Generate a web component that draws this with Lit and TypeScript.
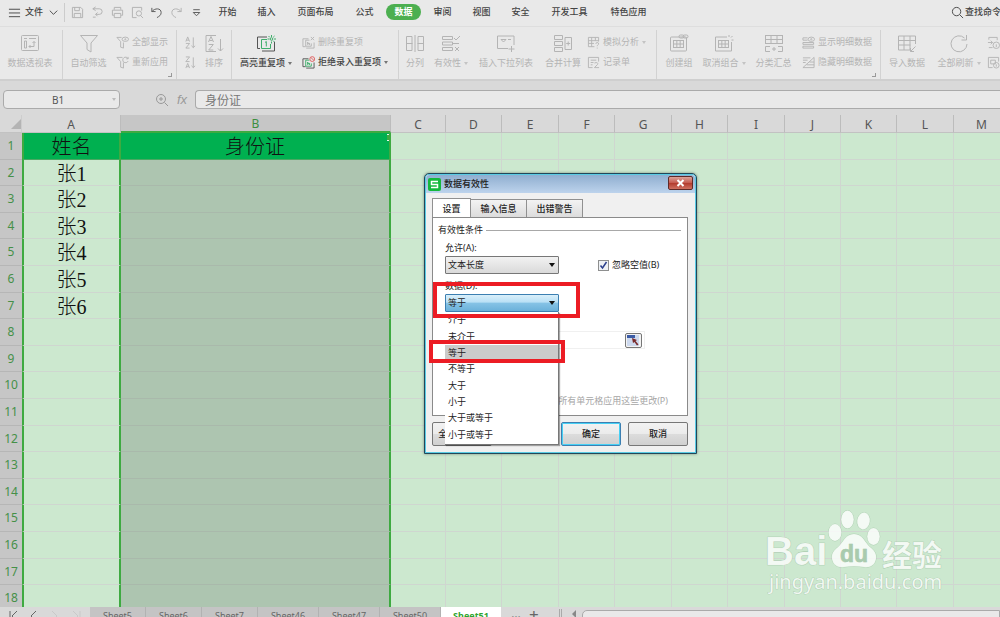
import { LitElement, html, css, svg, nothing } from "lit";
import { customElement } from "lit/decorators.js";
import { classMap } from "lit/directives/class-map.js";

type Shape = ReturnType<typeof svg>;

const grid = (x: number, y: number, w: number, h: number) => svg`
  <rect x=${x} y=${y} width=${w} height=${h} />
  <path d="M${x} ${y + h / 2}h${w}M${x + w / 3} ${y}v${h}M${x + (2 * w) / 3} ${y}v${h}" />`;

const stack = svg`
  <path d="M4 11.500H1V3h6M13 7v6H4.500" />
  <path d="M8 4.500H4v6.500h6V8M6 9.500V6.500l2 3v-2" />`;

/* 20 x 20 glyphs */
const BIG: Record<string, Shape> = {
  pivot: svg`<rect x="1.500" y="1.500" width="17" height="15" rx="1" />
    <path d="M4 4.500h3M9 4.500h7M4.500 7v7h2v-7zM14 7.500v5H9M12.500 9l1.500-1.500L15.500 9M10.500 11L9 12.500l1.500 1.500" />`,
  filter: svg`<path d="M1.500 1.500h17l-6.500 7.500v9l-4-2.500V9z" />`,
  sort: svg`<path d="M12 1.500H2v16h10M16.500 5v12M14 14.500l2.500 2.500 2.500-2.500" />
    <path d="M4.500 8L7 2.500 9.500 8M5.500 6.500h3M4.700 10.500h4.600L4.700 16h4.600" />`,
  highlight: svg`<g class="dark"><path d="M4 14.500H1.500V3H11M18.500 8v9H6" /></g>
    <g class="green"><path d="M11 5.500H5.500v9h9V10M9 8.500l1.300-1v5M15.500 1v2M15.500 7.500v2M11.500 5h2M18 5h2M12.500 2l1.300 1.300M18.500 2l-1.300 1.300M18.500 8l-1.300-1.300" /><circle cx="15.500" cy="5" r="1.300" /></g>`,
  split: svg`<path d="M7 2.500H1.500v14H7M13 2.500h5.500v14H13M1.500 9.500h6M12.500 9.500h6M7 2.500v14M13 2.500v14M10 1v17" />`,
  valid: svg`<path d="M1.500 2.500h10v3h-10zM1.500 8h10v3h-10zM1.500 13.500h10v3h-10zM13 4l2 2 4-4M12 9.500h6M14 13l4 4M18 13l-4 4" />`,
  dropdown: svg`<path d="M12 14.500H1.500V2H18v9M5 5.500h5L7.500 8zM12 5.500h3M15.500 12v6M12.500 15h6" />`,
  merge: svg`<path d="M1.500 1.500h8v4h-8zM1.500 7.500h8v4h-8zM1.500 13.500h8v4h-8zM12 3.500h6.500v12H12zM15.200 7.500v4M13.200 9.500h4" />`,
  group: svg`<rect x="1.500" y="3" width="16" height="14" rx="1" />${grid(4.5, 6.5, 10, 7)}
    <rect x="10" y="1" width="5" height="3" rx="1.500" /><rect x="14" y="1" width="5" height="3" rx="1.500" />`,
  ungroup: svg`<path d="M13 3H1.500v14h16V8" />${grid(4.5, 6.5, 10, 7)}<path d="M15 1v2M18.500 2L17 3.500M17.500 6h2" />`,
  subtotal: svg`<rect x="1.500" y="1.500" width="17" height="8" /><path d="M1.500 5.500h17M7 1.500v8M13 1.500v8M6 12.500H1.500v5H6M14 12.500h4.500v5H14M8 15h4M10 13v4" />`,
  importData: svg`<path d="M13 16H1.500V2h17v8M1.500 6.500h17M1.500 11h12M7 2v14M13 2v14M18.500 12.500l-5 5M13.500 14v3.500H17" />`,
  refresh: svg`<path d="M18 10a8 8 0 1 1-2.500-6M17.500 1v5H12.500" />`,
};

/* 14 x 14 glyphs */
const SMALL: Record<string, Shape> = {
  menu: svg`<path d="M1 3.500h12M1 7.500h12M1 11.500h12" />`,
  chevron: svg`<path d="M3 5l4 4 4-4" />`,
  save: svg`<path d="M1.500 1.500h9l2 2v9h-11zM4 1.500v3.500h5V1.500M3.500 12V8h7v4" />`,
  exportDoc: svg`<path d="M2 3h7a3 3 0 0 1 0 6H5M7 7L5 9l2 2M5 1L2 3l3 2M2 12h3" />`,
  print: svg`<path d="M3.500 4V1.500h7V4M3 10H1.500V4.500h11V10H11M3.500 8h7v4.500h-7z" />`,
  preview: svg`<path d="M6 12.500H1.500v-11h10V5" /><circle cx="8.500" cy="8" r="2.800" /><path d="M10.500 10.500l2.500 2.500" />`,
  undo: svg`<path d="M2 2v4h4M2 6c3-4 10-4 10 1 0 3-2 4-4.500 5.500" />`,
  redo: svg`<path d="M12 2v4H8M12 6C9 2 2 2 2 7c0 3 2 4 4.500 5.500" />`,
  more: svg`<path d="M3.500 4h7M3.500 7h7L7 10.500z" />`,
  search: svg`<circle cx="6" cy="6" r="4.500" /><path d="M9.500 9.500L13 13" />`,
  lens: svg`<circle cx="6" cy="6" r="4.500" /><path d="M9.500 9.500L13 13M4 6h4M6 4v4" />`,
  showAll: svg`<path d="M1 1.500h5M1 1.500L5 6v6l3 1V7" /><ellipse cx="10" cy="3.500" rx="3.500" ry="2.300" /><circle cx="10" cy="3.500" r="0.600" />`,
  reapply: svg`<path d="M1 1.500h6M1 1.500L5 6v6l3 1V7M13 3a3 3 0 1 0 0 2.500M13 1v2h-2" />`,
  sortAsc: svg`<path d="M2 6l2-5 2 5M2.700 4.500h2.600M2 8h4L2 13h4M10 1.500v11M8 10.500l2 2 2-2" />`,
  sortDesc: svg`<path d="M2 1h4L2 6h4M2 13l2-5 2 5M2.700 11.500h2.600M10 1.500v11M8 10.500l2 2 2-2" />`,
  removeDup: svg`${stack}<path d="M9.500 1l3.500 3.500M13 1L9.500 4.500" />`,
  rejectDup: svg`<g class="dark"><path d="M4 11.500H1V3h6M13 7v6H4.500" /></g><g class="green"><path d="M8 4.500H4v6.500h6V8M6 9.500V6.500l2 3v-2" /></g>
    <g class="red"><circle cx="11" cy="3.300" r="2.600" /><path d="M9.500 1.500l3.500 3.500" /></g>`,
  whatIf: svg`<path d="M8 11.500H1.500v-10h11V6M1.500 5h11M1.500 8h6M5 1.500v10M9 1.500V5M9.500 8.500c0-2 3-2 3 0 0 1-1.500 1-1.500 2.500M11 12.500v1" />`,
  form: svg`<path d="M6 12.500H1.500v-11h11V6M4 4.500h6M4 7h3M4 9.500h2M8 7.500c3-1 4 0 3.500 1.500L8 12.500h5" />`,
  showDetail: svg`<path d="M6 2H1v2.500h5M1 7h11.500v2H1zM1 11h11.500v2H1z" /><ellipse cx="10" cy="3.500" rx="3.500" ry="2.300" /><circle cx="10" cy="3.500" r="0.700" />`,
  hideDetail: svg`<path d="M1 2h8M1 4.500h5M1 7h3M1 12.500h12V1.500zM5 9.500h8M8 6.500h5" />`,
  link: svg`<path d="M2 4V1.500h9v3M2 12.500h4M1 7h5M4 5l2 2-2 2" /><circle cx="10" cy="10" r="3.500" /><path d="M10 9v3" />`,
  props: svg`<path d="M6 12.500H1.500v-11h11V6M4 4.500h5v4H4z" /><circle cx="10" cy="10" r="3" /><path d="M10 9v2.500" />`,
};

const icon = (name: string) =>
  name in BIG
    ? html`<svg class="big-icon" viewBox="0 0 20 20" aria-hidden="true">${BIG[name]}</svg>`
    : html`<svg class="small-icon" viewBox="0 0 14 14" aria-hidden="true">${SMALL[name]}</svg>`;

interface Cmd { icon: string; label: string; menu?: boolean; on?: boolean; width?: number }
interface Group { big?: Cmd[]; small?: Cmd[]; smallFirst?: boolean; launcher?: boolean; width?: number }

const GROUPS: Group[] = [
  { width: 63, big: [{ icon: "pivot", label: "数据透视表", width: 60 }] },
  { width: 114, launcher: true, big: [{ icon: "filter", label: "自动筛选", width: 51 }],
    small: [{ icon: "showAll", label: "全部显示" }, { icon: "reapply", label: "重新应用" }] },
  { width: 55, smallFirst: true, big: [{ icon: "sort", label: "排序", width: 34 }],
    small: [{ icon: "sortAsc", label: "" }, { icon: "sortDesc", label: "" }] },
  { width: 167, big: [{ icon: "highlight", label: "高亮重复项", menu: true, on: true, width: 68 }],
    small: [{ icon: "removeDup", label: "删除重复项" }, { icon: "rejectDup", label: "拒绝录入重复项", menu: true, on: true }] },
  { width: 258, big: [
      { icon: "split", label: "分列", width: 32 }, { icon: "valid", label: "有效性", menu: true, width: 40 },
      { icon: "dropdown", label: "插入下拉列表", width: 70 }, { icon: "merge", label: "合并计算", width: 44 }],
    small: [{ icon: "whatIf", label: "模拟分析", menu: true }, { icon: "form", label: "记录单" }] },
  { width: 224, launcher: true, big: [
      { icon: "group", label: "创建组", width: 44 }, { icon: "ungroup", label: "取消组合", menu: true, width: 46 },
      { icon: "subtotal", label: "分类汇总", width: 53 }],
    small: [{ icon: "showDetail", label: "显示明细数据" }, { icon: "hideDetail", label: "隐藏明细数据" }] },
  { big: [
      { icon: "importData", label: "导入数据", width: 52 }, { icon: "refresh", label: "全部刷新", menu: true, width: 52 }],
    small: [{ icon: "link", label: "" }, { icon: "props", label: "" }] },
];

const TABS = ["开始", "插入", "页面布局", "公式", "数据", "审阅", "视图", "安全", "开发工具", "特色应用"];
const QUICK = [["save", "保存"], ["exportDoc", "输出"], ["print", "打印"], ["preview", "预览"], ["undo", "撤销"], ["redo", "恢复"], ["more", "更多"]];
const COLS: [string, number][] = [
  ["A", 99], ["B", 270], ["C", 55], ["D", 56], ["E", 57], ["F", 56], ["G", 57],
  ["H", 56], ["I", 57], ["J", 56], ["K", 56], ["L", 57], ["M", 56],
];
const NAMES = ["姓名", "张1", "张2", "张3", "张4", "张5", "张6"];
const SHEETS: [string, number][] = [
  ["Sheet5", 56], ["Sheet6", 56], ["Sheet7", 56], ["Sheet46", 61], ["Sheet47", 61], ["Sheet50", 61], ["Sheet51", 60],
];
const OPERATORS = ["介于", "未介于", "等于", "不等于", "大于", "小于", "大于或等于", "小于或等于"];

const controls = css`
  * { box-sizing: border-box; }
  button, input, select { font: inherit; color: inherit; margin: 0; padding: 0; border: 0; background: none; border-radius: 0; }
  svg { display: block; fill: none; stroke: currentColor; flex: none; }
`;

@customElement("wps-ribbon")
class WpsRibbon extends LitElement {
  static styles = [controls, css`
    :host { display: block; background: #e9e9e9; color: #444; font-size: 9px; line-height: 12px; }
    .menubar { display: flex; align-items: center; height: 27px; border-bottom: 1px solid #dedede; white-space: nowrap; overflow: hidden; padding-bottom: 2px; }
    .file { display: flex; align-items: center; gap: 4px; width: 65px; height: 19px; padding-left: 8px; border-right: 1px solid #ccc; flex: none; font-weight: 500; }
    .quick { display: flex; width: 138px; margin: 0 2px 0 3px; flex: none; color: #b0b0b0; }
    .quick button { flex: 1; display: flex; justify-content: center; }
    .quick .strong { color: #555; }
    .tabs { display: flex; flex: 1; }
    .tab { width: 39px; display: flex; justify-content: center; font-weight: 500; flex: none; }
    .tab.wide { width: 59px; }
    .tab span { padding: 2px 8px; border-radius: 8px; }
    .tab.active span { background: #4caf50; color: #fff; font-weight: 700; }
    .find { display: flex; align-items: center; gap: 1px; flex: none; width: 49px; font-weight: 500; overflow: hidden; }
    .small-icon { width: 13px; height: 13px; stroke-width: 1; }
    .big-icon { width: 20px; height: 20px; stroke-width: 1; }
    .ribbon { display: flex; height: 54px; padding-top: 3px; border-bottom: 2px solid #cfcfcf; overflow: hidden; color: #b4b4b4; }
    .group { position: relative; display: flex; flex: none; border-right: 1px solid #d2d2d2; white-space: nowrap; }
    .group:last-child { border: 0; }
    .group.first-small .pair { order: -1; margin-left: 7px; }
    .cmd { display: flex; align-items: center; }
    .cmd.big { flex-direction: column; gap: 3px; padding-top: 4px; flex: none; }
    .cmd.small { gap: 3px; height: 20px; }
    .cmd.on { color: #444; font-weight: 500; }
    .cap { display: flex; align-items: center; gap: 3px; }
    .arrow { border: 2px solid transparent; border-top: 3px solid currentColor; border-bottom: 0; opacity: 0.7; }
    .pair { display: flex; flex-direction: column; padding-top: 2px; margin-left: 2px; }
    .green { color: #3fae6b; stroke: #3fae6b; }
    .dark { stroke: #555; }
    .red { stroke: #e06060; }
    .launcher { position: absolute; right: 4px; bottom: 2px; width: 4px; height: 4px; border: solid #999; border-width: 0 1px 1px 0; }
  `];

  private command(c: Cmd, big: boolean) {
    const caption = c.label
      ? html`<span class="cap">${c.label}${c.menu ? html`<i class="arrow"></i>` : nothing}</span>` : nothing;
    return html`<button class=${classMap({ cmd: true, big, small: !big, on: !!c.on })}
      style=${big ? `width:${c.width}px` : nothing} aria-label=${c.label || c.icon}>${icon(c.icon)}${caption}</button>`;
  }

  render() {
    return html`
      <nav class="menubar">
        <button class="file">${icon("menu")}<span>文件</span>${icon("chevron")}</button>
        <div class="quick">${QUICK.map(([n, l]) => html`
          <button class=${classMap({ strong: n === "undo" || n === "more" })} aria-label=${l}>${icon(n)}</button>`)}</div>
        <div class="tabs">${TABS.map((t) => html`
          <button class=${classMap({ tab: true, wide: t.length > 2, active: t === "数据" })}><span>${t}</span></button>`)}</div>
        <button class="find">${icon("search")}<span>查找命令</span></button>
      </nav>
      <div class="ribbon">${GROUPS.map((g) => html`
        <div class=${classMap({ group: true, "first-small": !!g.smallFirst })} style=${g.width ? `width:${g.width}px` : nothing}>
          ${g.big?.map((c) => this.command(c, true))}
          ${g.small ? html`<div class="pair">${g.small.map((c) => this.command(c, false))}</div>` : nothing}
          ${g.launcher ? html`<i class="launcher"></i>` : nothing}
        </div>`)}</div>`;
  }
}

@customElement("wps-sheet")
class WpsSheet extends LitElement {
  static styles = [controls, css`
    :host { display: flex; flex-direction: column; min-height: 0; background: #d9d9d9; }
    .formula { display: flex; align-items: center; height: 34px; flex: none; padding: 3px 0 0 3px; color: #999; }
    .name { display: flex; align-items: center; width: 117px; height: 19px; border: 1px solid #aaa; border-radius: 4px; background: #e9e9e9; padding-right: 3px; }
    .name input { flex: 1; min-width: 0; text-align: center; font-size: 10px; color: #555; }
    .arrow { border: 2px solid transparent; border-top: 3px solid #bbb; border-bottom: 0; }
    .tools { display: flex; align-items: center; gap: 8px; width: 75px; padding-left: 35px; }
    .small-icon { width: 14px; height: 14px; stroke-width: 1; }
    .fx { font: italic 13px "Liberation Sans", sans-serif; }
    .value { flex: 1; min-width: 0; height: 19px; border: 1px solid #aaa; border-right: 0; border-radius: 4px 0 0 4px; background: #e9e9e9; padding-left: 9px; font-size: 12px; color: #777; }
    .cells { flex: 1; min-height: 0; overflow: hidden; background: #cce8cf; }
    table { table-layout: fixed; width: 0; border-collapse: separate; border-spacing: 0; }
    th, td { padding: 0; overflow: hidden; white-space: nowrap; text-align: center; }
    thead th { height: 18px; padding-top: 2px; background: #d9d9d9; border-right: 1px solid #bcbcbc; border-bottom: 1px solid #c2c2c2; font-weight: 400; font-size: 12px; line-height: 14px; color: #555; }
    thead .picked { background: #c6c6c6; color: #3c8f3f; border-bottom: 2px solid #3eaa41; }
    thead .corner { text-align: right; border-right-color: #cdcdcd; }
    .corner i { display: inline-block; border: 5px solid transparent; border-right-color: #b4b4b4; border-bottom-color: #b4b4b4; }
    tbody tr { height: 27px; }
    tbody tr:nth-child(5n + 2), tbody tr:nth-child(5n + 4) { height: 26px; }
    tbody th { background: #c6c6c6; border-bottom: 1px solid #b6b6b6; font-weight: 400; font-size: 12px; line-height: 14px; color: #459048; }
    td { padding-top: 2px; border-right: 1px solid #cfd6d0; border-bottom: 1px solid #cfd6d0; font: 20px/22px "Liberation Serif", "Noto Sans CJK SC", serif; font-weight: 300; color: #111; }
    .a { border-left: 2px solid #3eaa41; border-right: 2px solid #3eaa41; }
    .b { position: relative; border-right: 2px solid #3eaa41; background: #adc5b0; border-bottom-color: #a9b9ab; }
    .title { background: #00b050; border-bottom-color: #4aa862; }
    .b.title::after { content: ""; position: absolute; right: -2px; top: 1px; width: 4px; height: 5px; background: #3eaa41; border: solid #e8f6e9; border-width: 1px 0; }
    .sheets { display: flex; height: 10px; flex: none; overflow: hidden; background: #d9d9d9; color: #666; }
    .nav { display: flex; width: 90px; padding-left: 6px; gap: 8px; color: #666; }
    .nav .off { color: #c9c9c9; }
    .nav svg { width: 14px; height: 14px; }
    .tab { height: 17px; background: #c4c4c4; border-right: 1px solid #b2b2b2; flex: none; font-size: 9px; line-height: 16px; }
    .tab.active { background: #fff; color: #2fa52f; font-weight: 700; border: 0; }
    .extra { height: 16px; font-size: 17px; line-height: 16px; }
    .extra.dots { width: 14px; height: 14px; margin: 0 6px 0 8px; font-size: 12px; line-height: 10px; }
    .grip { width: 3px; height: 9px; margin: 2px 8px 0 20px; border: solid #aaa; border-width: 0 1px; }
    .left { width: 12px; }
    .left i { display: block; margin: 3px 0 0 2px; border: 4px solid transparent; border-right-color: #888; border-left: 0; width: 0; }
    .track { flex: 1; height: 16px; margin-top: 3px; border: 1px solid #aaa; border-radius: 5px 0 0 5px; background: #e9e9e9; }
  `];

  render() {
    return html`
      <div class="formula">
        <div class="name"><input aria-label="名称框" value="B1" /><i class="arrow"></i></div>
        <div class="tools">${icon("lens")}<span class="fx">fx</span></div>
        <input class="value" aria-label="编辑栏" value="身份证" />
      </div>
      <div class="cells"><table>
        <colgroup><col style="width:22px" />${COLS.map(([, w]) => html`<col style="width:${w}px" />`)}</colgroup>
        <thead><tr><th class="corner"><i></i></th>${COLS.map(([c]) => html`<th class=${classMap({ picked: c === "B" })}>${c}</th>`)}</tr></thead>
        <tbody>${Array.from({ length: 18 }, (_, r) => html`<tr><th>${r + 1}</th>${COLS.map(([c]) => html`
          <td class=${classMap({ a: c === "A", b: c === "B", title: r === 0 && (c === "A" || c === "B") })}>${
            c === "A" ? NAMES[r] ?? nothing : c === "B" && r === 0 ? "身份证" : nothing}</td>`)}</tr>`)}</tbody>
      </table></div>
      <div class="sheets">
        <div class="nav">
          <svg viewBox="0 0 14 14"><path d="M4 4v10M11 4L6 9l5 5" /></svg>
          <svg viewBox="0 0 14 14"><path d="M8 4L3 9l5 5" /></svg>
          <svg class="off" viewBox="0 0 14 14"><path d="M2 4l5 5-5 5" /></svg>
          <svg class="off" viewBox="0 0 14 14"><path d="M1 4l5 5-5 5M8 4v10" /></svg>
        </div>
        ${SHEETS.map(([s, w]) => html`<button class=${classMap({ tab: true, active: s === "Sheet51" })} style="width:${w}px">${s}</button>`)}
        <button class="extra dots" aria-label="更多工作表">…</button><button class="extra" aria-label="新建工作表">+</button>
        <i class="grip"></i><span class="left"><i></i></span><div class="track"></div>
      </div>`;
  }
}

@customElement("validation-dialog")
class ValidationDialog extends LitElement {
  static styles = [controls, css`
    :host { display: block; box-sizing: border-box; width: 273px; border: 1px solid #21475a; border-radius: 5px 5px 0 0; background: #f0f0f0;
      box-shadow: inset 0 0 0 1px #59cbe4, 0 0 3px #0006; padding: 0 2px 3px; font-size: 9px; line-height: 12px; color: #222; }
    .titlebar { display: flex; align-items: center; gap: 3px; height: 18px; margin: 1px -1px 0; padding: 0 2px; border-radius: 4px 4px 0 0;
      background: linear-gradient(#8faed0, #bdd3ec); font-weight: 500; }
    .logo { width: 13px; height: 13px; stroke-width: 1.5; }
    .titlebar span { flex: 1; }
    .close { width: 25px; height: 14px; margin-top: -2px; border: 1px solid #5e2a28; border-radius: 2px; color: #fff;
      background: linear-gradient(#dba39a, #c4574c 50%, #b13a2d 51%, #cf7060); display: grid; place-items: center; }
    .close svg { width: 9px; height: 8px; stroke-width: 2; }
    .body { padding: 5px 6px 4px 5px; }
    .tabs { display: flex; align-items: flex-end; }
    .tab { height: 18px; width: 56px; border: 1px solid #909090; border-left: 0; border-bottom: 0; background: linear-gradient(#f3f3f3, #dcdcdc); font-weight: 500; }
    .tab.active { width: 39px; height: 20px; border-left: 1px solid #909090; background: #fff; margin-bottom: -1px; position: relative; }
    .panel { position: relative; height: 199px; border: 1px solid #8a8a8a; background: #fff; padding: 6px 6px 0 5px; }
    .legend { display: flex; align-items: center; gap: 3px; }
    .legend::after { content: ""; flex: 1; border-top: 1px solid #a8a8a8; }
    .field { display: flex; flex-direction: column; gap: 2px; padding: 6px 0 0 7px; }
    .line { display: flex; align-items: center; gap: 39px; }
    .pick { position: relative; width: 114px; height: 18px; }
    .pick select { appearance: none; width: 100%; height: 100%; border: 1px solid #777; padding-left: 2px; border-radius: 1px; background: linear-gradient(#f2f2f2, #dadada); display: block; }
    .pick::after { content: ""; position: absolute; right: 4px; top: 7px; border: 3px solid transparent; border-top: 4px solid #111; border-bottom: 0; }
    .pick.open select { border-color: #3c7fb1; background: linear-gradient(#d9effa, #b9e0f5 45%, #86c3e6 50%, #6bb1da); }
    .check { display: flex; align-items: center; gap: 3px; }
    .check input { appearance: none; width: 11px; height: 11px; border: 1px solid #8e8f8f; background: #eef1f5; }
    .tick { position: relative; display: block; height: 11px; }
    .tick input { display: block; }
    .tick svg { position: absolute; left: 1px; top: 1px; width: 9px; height: 9px; stroke: #2b3f8c; stroke-width: 1.5; }
    .list { position: absolute; z-index: 1; left: 12px; top: 94px; width: 114px; height: 133px; margin: 0; padding: 0 0 1px; list-style: none; display: flex; flex-direction: column;
      background: #fff; border-right: 1px solid #777; border-bottom: 1px solid #777; box-shadow: 1px 1px 1px #0005; }
    .list li { flex: 1; padding-left: 3px; display: flex; align-items: center; }
    .list .picked { background: #cbcbcb; }
    .range { display: flex; justify-content: flex-end; align-items: center; width: 200px; height: 18px; margin: 19px 0 0 7px; border: 1px solid #f0f0f0; padding-right: 2px; }
    .range input { flex: 1; min-width: 0; }
    .range button { width: 17px; height: 15px; border: 1px solid #777; border-radius: 2px; background: #f3f3f3; padding: 1px; }
    .range svg { width: 13px; height: 11px; stroke: none; }
    .apply { display: flex; justify-content: flex-end; align-items: center; gap: 3px; margin-top: 46px; padding-right: 13px; color: #a5a5a5; }
    .actions { display: flex; gap: 7px; padding-top: 6px; }
    .actions button { width: 60px; height: 24px; border: 1px solid #777; border-radius: 2px; background: linear-gradient(#f2f2f2, #ebebeb 50%, #dcdcdc 51%, #d0d0d0); font-weight: 500; }
    .actions .clear { margin-right: auto; }
    .actions .ok { border-color: #3c7fb1; box-shadow: inset 0 0 0 1px #46d0f5; }
    .mark { position: absolute; z-index: 2; border: 4px solid #ec1c24; pointer-events: none; }
    .mark.value { left: 0; top: 64px; width: 147px; height: 36px; }
    .mark.choice { left: -4px; top: 122px; width: 136px; height: 23px; }
  `];

  render() {
    return html`
      <div class="titlebar">
        <svg class="logo" viewBox="0 0 13 13"><rect width="13" height="13" rx="2" fill="#14b83c" stroke="none" /><path d="M10 3.500H3.500v3h6v3H3" stroke="#fff" /></svg>
        <span>数据有效性</span>
        <button class="close" aria-label="关闭"><svg viewBox="0 0 9 8"><path d="M1.500 1l6 6M7.500 1l-6 6" /></svg></button>
      </div>
      <div class="body">
        <div class="tabs"><button class="tab active">设置</button><button class="tab">输入信息</button><button class="tab">出错警告</button></div>
        <div class="panel">
          <div class="legend">有效性条件</div>
          <div class="field">
            <label for="allow">允许(A):</label>
            <div class="line">
              <div class="pick"><select id="allow"><option>文本长度</option></select></div>
              <label class="check"><span class="tick"><input type="checkbox" checked /><svg viewBox="0 0 9 9"><path d="M1.500 4.500l2 2.500L7.500 1" /></svg></span>忽略空值(B)</label>
            </div>
          </div>
          <div class="field">
            <label for="op">数据(D):</label>
            <div class="pick open"><select id="op"><option>等于</option></select></div>
          </div>
          <ul class="list" role="listbox">${OPERATORS.map((o) => html`
            <li role="option" class=${classMap({ picked: o === "等于" })} aria-selected=${o === "等于"}>${o}</li>`)}</ul>
          <div class="range"><input aria-label="长度" />
            <button aria-label="选择区域"><svg viewBox="0 0 13 11"><rect width="12" height="11" fill="#cdd9ee" /><path d="M0 0h8v3H0z" fill="#3b5ba5" /><path d="M5 3l5 2-1.500 1 3 3.500-1.500 1-2.500-3.500L6 8z" fill="#7a2b2b" /></svg></button></div>
          <label class="apply"><input type="checkbox" disabled hidden />所有单元格应用这些更改(P)</label>
          <i class="mark value"></i><i class="mark choice"></i>
        </div>
        <div class="actions"><button class="clear">全部清除(C)</button><button class="ok">确定</button><button>取消</button></div>
      </div>`;
  }
}

@customElement("app-root")
class AppRoot extends LitElement {
  static styles = css`
    :host { display: flex; flex-direction: column; position: relative; height: 100vh; overflow: hidden; font-family: "Noto Sans", "Noto Sans CJK SC", sans-serif; }
    wps-ribbon { flex: none; }
    wps-sheet { flex: 1; }
    validation-dialog { position: absolute; left: 424px; top: 173px; }
    .watermark { position: absolute; right: 50px; bottom: 17px; width: 190px; height: 94px; pointer-events: none; fill: #fff; fill-opacity: 0.78; stroke: #9fc4a5; stroke-width: 0.6; paint-order: stroke; }
    .bai { font: 700 40px "Liberation Sans", sans-serif; }
    .du { font: 700 23px "Liberation Sans", sans-serif; fill: #a9cbae; fill-opacity: 1; }
    .han { font: 700 30px "Noto Sans CJK SC", sans-serif; }
    .url { font: 20px "Noto Sans", sans-serif; }
  `;

  render() {
    return html`
      <wps-ribbon></wps-ribbon>
      <wps-sheet></wps-sheet>
      <validation-dialog></validation-dialog>
      <svg class="watermark" viewBox="0 0 190 94">
        <text class="bai" x="5" y="59">Bai</text>
        <ellipse cx="75" cy="26.500" rx="6.500" ry="8.500" /><ellipse cx="87.500" cy="13.500" rx="6.300" ry="9" />
        <ellipse cx="103.500" cy="15" rx="6.300" ry="8.500" transform="rotate(8 103.500 15)" /><ellipse cx="113.500" cy="30.500" rx="6.300" ry="8.500" />
        <path d="M94 28c-9 0-11 9-16 13-4 3-7 7-6 12 1 6 6 9 12 8 7-1 13-1 20 0 6 1 11-2 12-8 1-5-2-9-6-12-5-4-7-13-16-13z" />
        <text class="du" x="80" y="56">du</text>
        <text class="han" x="122" y="60">经验</text>
        <text class="url" x="9" y="83">jingyan.baidu.com</text>
      </svg>`;
  }
}
